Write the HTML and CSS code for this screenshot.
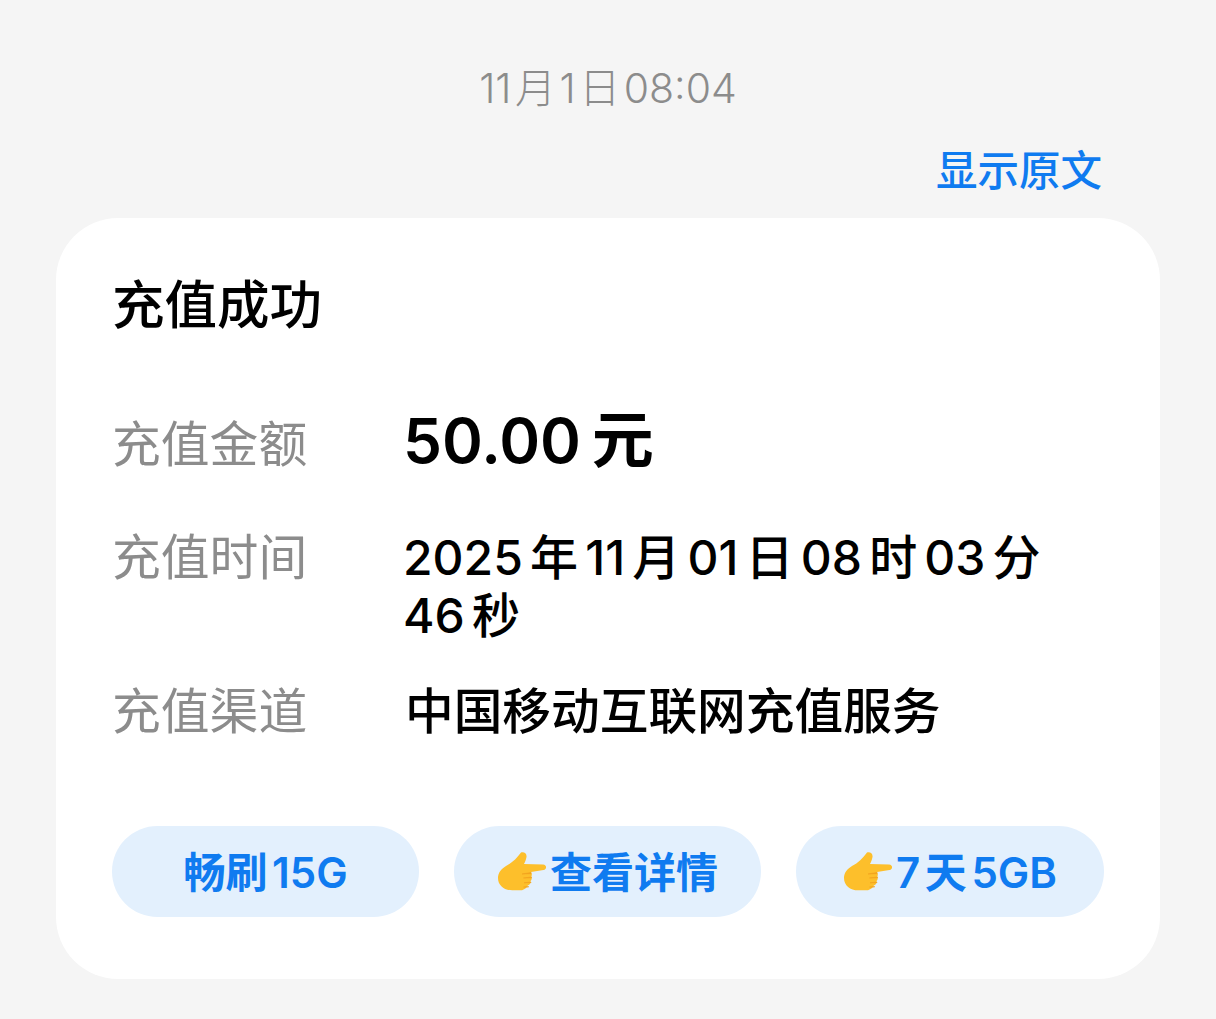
FILE: index.html
```html
<!DOCTYPE html>
<html lang="zh-CN">
<head>
  <meta charset="UTF-8" />
  <title>充值成功</title>
  <link rel="stylesheet" href="styles.css">
</head>
<body>
  <svg class="defs" width="0" height="0">
    <symbol id="point" viewBox="0 0 50 40">
      <path fill="#fdbf2b" d="M24 .5c3-1 6 1 5.500 4.500-.4 2.500-1.500 5-2.500 7l19 .5c4 .2 4 5 .5 5.500l-12.500 2c1.200 1.500 1 3.500.3 4.500.8 1.500.5 3.500-.8 4.500.3 2-.8 3.800-2.500 4.300-1 2-3 4-6 5H17C8 39 1 34 1 26c0-5 3-9 8-12 6-3 11-8 15-13.500z"/>
      <path fill="#f2a21e" d="M34 20.500l-9 1.500 9-.3zM34.500 25l-8 1 8-.2zM34 30l-7 .8 7-.1zM31.500 34.500l-5 .6 5 0z" stroke="#f2a21e" stroke-width=".6"/>
    </symbol>
  </svg>

  <div class="stamp">11 月 1 日 08:04</div>
  <div class="toggle"><a class="toggle-link">显示原文</a></div>

  <div class="card">
    <h2 class="title">充值成功</h2>

    <div class="rows">
      <div class="label label-amount">充值金额</div>
      <div class="value amount">50.00 元</div>

      <div class="label">充值时间</div>
      <div class="value time">2025 年 11 月 01 日 08 时 03 分 46 秒</div>

      <div class="label">充值渠道</div>
      <div class="value">中国移动互联网充值服务</div>
    </div>

    <div class="actions">
      <button class="action">畅刷 15G</button>
      <button class="action"><svg class="hand"><use href="#point"/></svg>查看详情</button>
      <button class="action"><svg class="hand"><use href="#point"/></svg>7 天 5GB</button>
    </div>
  </div>
</body>
</html>
```

FILE: styles.css
```css
body {
  margin: 0;
  height: 1019px;
  overflow: hidden;
  background: #f5f5f5;
  font-family: Inter, "Noto Sans CJK SC", sans-serif;
  color: #000;
}
.defs {
  position: absolute;
}
.stamp {
  padding-top: 61px;
  height: 55px;
  line-height: 55px;
  text-align: center;
  font-size: 41px;
  font-weight: 300;
  color: #8c8c8c;
  word-spacing: -8px;
}
.toggle {
  height: 75px;
  padding-top: 27px;
  padding-right: 114px;
  text-align: right;
  font-size: 41.500px;
  line-height: 56px;
}
.toggle-link {
  color: #0f7bf0;
  font-weight: 500;
}
.card {
  margin: 0 56px;
  height: 761px;
  box-sizing: border-box;
  padding: 52px 56px 0;
  background: white;
  border-radius: 62px;
}
.title {
  margin: 0;
  font-size: 52.500px;
  line-height: 70px;
  font-weight: 500;
}
.rows {
  display: grid;
  grid-template-columns: 291px 1fr;
  margin: 66px 0 0 0;
  row-gap: 38px;
}
.label {
  font-size: 48.800px;
  line-height: 58px;
  color: #8c8c8c;
}
.label-amount {
  padding-top: 10px;
  padding-bottom: 17px;
}
.value {
  margin-left: 2px;
  font-size: 48.700px;
  line-height: 58px;
  font-weight: 500;
  word-spacing: -5.600px;
}
.amount {
  margin-left: 0;
  font-size: 62px;
  line-height: 70px;
  font-weight: 600;
  word-spacing: -5px;
}
.time {
  margin-left: 0;
  font-size: 48px;
  width: 650px;
}
.actions {
  display: flex;
  gap: 35px;
  margin-top: 85px;
}
.action {
  display: flex;
  align-items: center;
  justify-content: center;
  width: 307px;
  height: 91px;
  padding: 0 0 5px;
  border: none;
  border-radius: 46px;
  background: #e3f0fd;
  color: #0f7bf0;
  font-family: inherit;
  font-size: 42px;
  font-weight: 600;
  word-spacing: -6px;
}
.action:last-child {
  width: 308px;
}
.hand {
  width: 50px;
  height: 40px;
  margin-top: 5px;
  margin-right: 3px;
}
```
